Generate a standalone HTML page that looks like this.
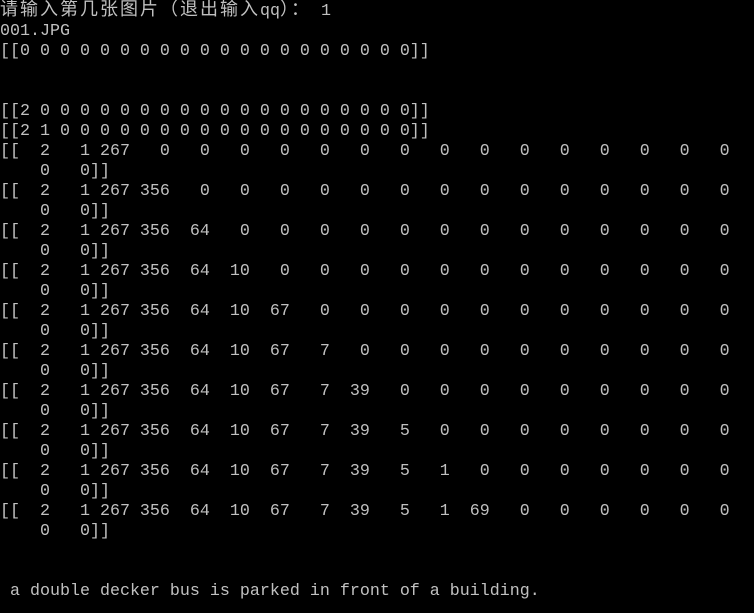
<!DOCTYPE html>
<html><head><meta charset="utf-8"><style>
html,body{margin:0;padding:0;background:#000;width:754px;height:613px;overflow:hidden}
pre{margin:0;padding:0;position:relative;top:-2px;color:#c0c0c0;font-family:"Liberation Mono","Noto Sans CJK SC",monospace;font-size:16.67px;line-height:20px;white-space:pre}
.cj{font-family:"Noto Sans CJK SC","WenQuanYi Zen Hei",sans-serif;font-size:18px;letter-spacing:2px}
</style></head><body><pre><span class="cj">请输入第几张图片（退出输入</span>qq<span class="cj">）：</span> 1
001.JPG
[[0 0 0 0 0 0 0 0 0 0 0 0 0 0 0 0 0 0 0 0]]


[[2 0 0 0 0 0 0 0 0 0 0 0 0 0 0 0 0 0 0 0]]
[[2 1 0 0 0 0 0 0 0 0 0 0 0 0 0 0 0 0 0 0]]
[[  2   1 267   0   0   0   0   0   0   0   0   0   0   0   0   0   0   0
    0   0]]
[[  2   1 267 356   0   0   0   0   0   0   0   0   0   0   0   0   0   0
    0   0]]
[[  2   1 267 356  64   0   0   0   0   0   0   0   0   0   0   0   0   0
    0   0]]
[[  2   1 267 356  64  10   0   0   0   0   0   0   0   0   0   0   0   0
    0   0]]
[[  2   1 267 356  64  10  67   0   0   0   0   0   0   0   0   0   0   0
    0   0]]
[[  2   1 267 356  64  10  67   7   0   0   0   0   0   0   0   0   0   0
    0   0]]
[[  2   1 267 356  64  10  67   7  39   0   0   0   0   0   0   0   0   0
    0   0]]
[[  2   1 267 356  64  10  67   7  39   5   0   0   0   0   0   0   0   0
    0   0]]
[[  2   1 267 356  64  10  67   7  39   5   1   0   0   0   0   0   0   0
    0   0]]
[[  2   1 267 356  64  10  67   7  39   5   1  69   0   0   0   0   0   0
    0   0]]


 a double decker bus is parked in front of a building.
</pre></body></html>
